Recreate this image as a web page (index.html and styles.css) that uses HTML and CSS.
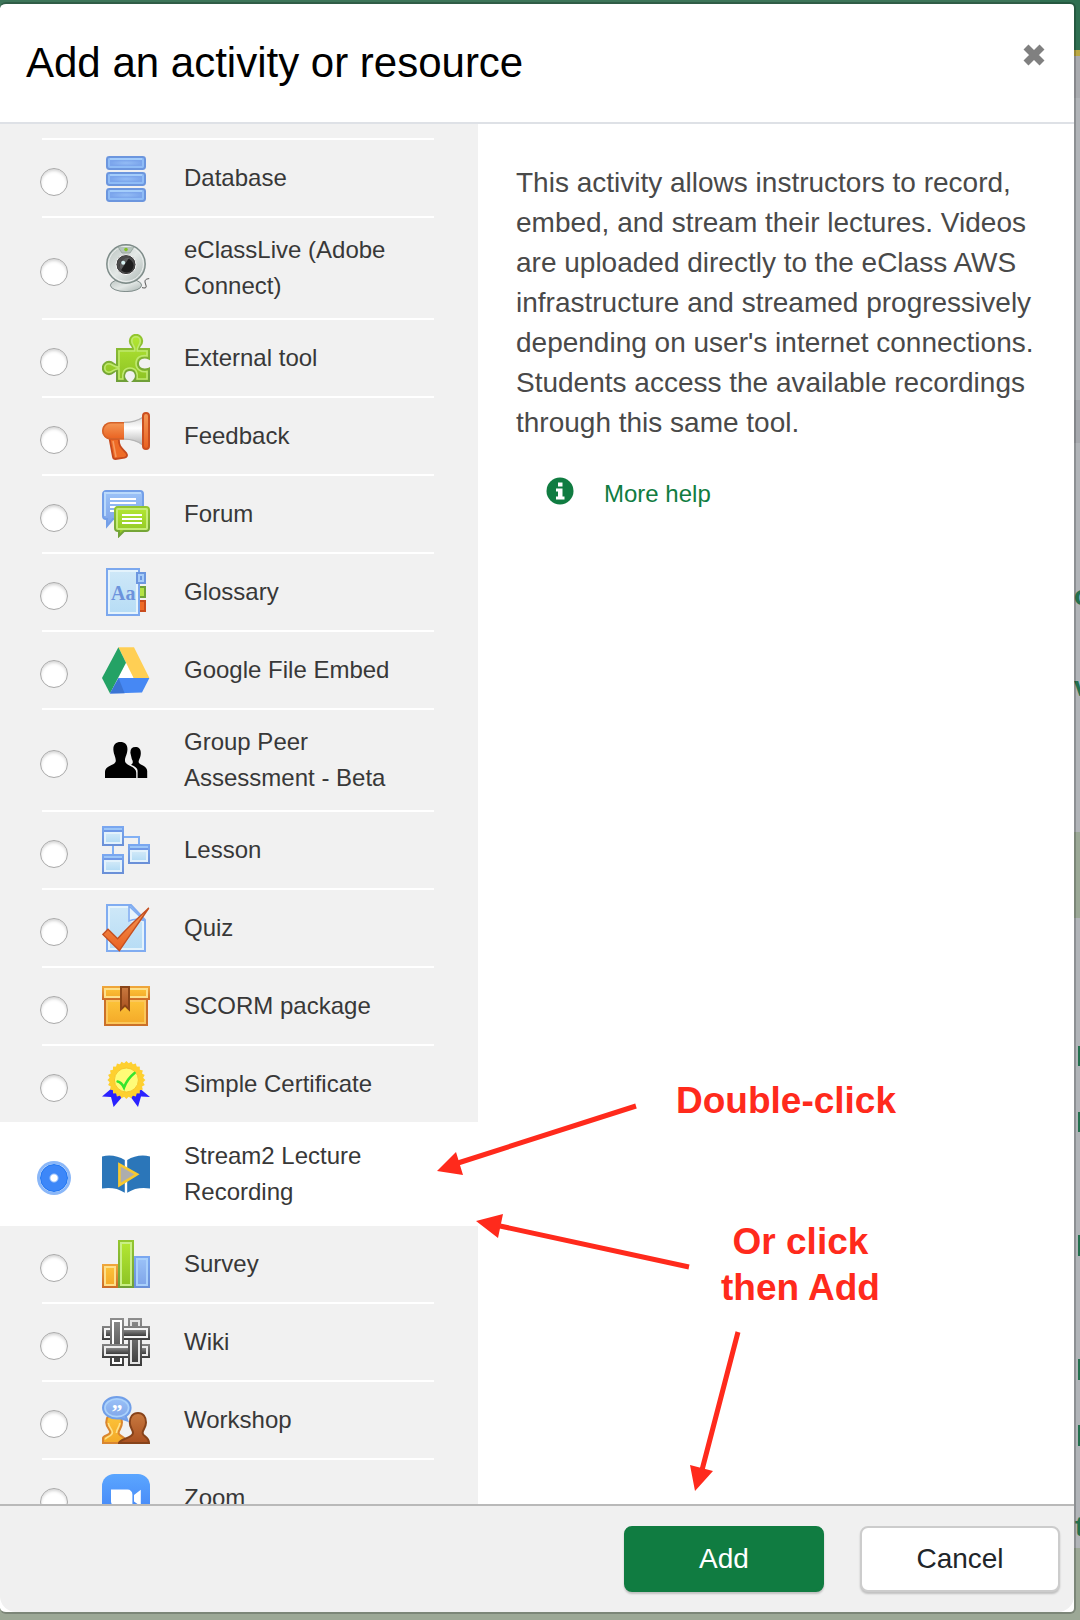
FILE: index.html
```html
<!DOCTYPE html>
<html lang="en">
<head>
<meta charset="utf-8">
<meta name="viewport" content="width=device-width, initial-scale=1">
<title>Add an activity or resource</title>
<link rel="stylesheet" href="styles.css">
</head>
<body>
<svg class="defs" aria-hidden="true">
  <defs>
    <linearGradient id="blue" x1="0" y1="0" x2="0" y2="1"><stop offset="0" stop-color="#9cc3f8"/><stop offset="1" stop-color="#7da3e8"/></linearGradient>
    <linearGradient id="blueEdge" x1="0" y1="0" x2="0" y2="1"><stop offset="0" stop-color="#7aa7f0"/><stop offset="1" stop-color="#6a90d8"/></linearGradient>
    <linearGradient id="pale" x1="0" y1="0" x2="0" y2="1"><stop offset="0" stop-color="#cfe8f8"/><stop offset="1" stop-color="#b6dcf5"/></linearGradient>
    <linearGradient id="green" x1="0" y1="0" x2="0" y2="1"><stop offset="0" stop-color="#b4e833"/><stop offset="1" stop-color="#8cc224"/></linearGradient>
    <linearGradient id="greenEdge" x1="0" y1="0" x2="0" y2="1"><stop offset="0" stop-color="#93c62f"/><stop offset="1" stop-color="#6f9f38"/></linearGradient>
    <linearGradient id="amber" x1="0" y1="0" x2="0" y2="1"><stop offset="0" stop-color="#fdc53a"/><stop offset="1" stop-color="#f3a828"/></linearGradient>
    <linearGradient id="amberEdge" x1="0" y1="0" x2="0" y2="1"><stop offset="0" stop-color="#efa63a"/><stop offset="1" stop-color="#cc6c28"/></linearGradient>
    <linearGradient id="orange" x1="0" y1="0" x2="0" y2="1"><stop offset="0" stop-color="#f59a58"/><stop offset="1" stop-color="#e9601f"/></linearGradient>
    <linearGradient id="brown" x1="0" y1="0" x2="0" y2="1"><stop offset="0" stop-color="#c97a40"/><stop offset="1" stop-color="#a95020"/></linearGradient>
    <linearGradient id="horn" x1="0" y1="0" x2="0" y2="1"><stop offset="0" stop-color="#d8d8d8"/><stop offset=".4" stop-color="#ffffff"/><stop offset="1" stop-color="#b4b4b4"/></linearGradient>
    <linearGradient id="steel" x1="0" y1="0" x2="1" y2="1"><stop offset="0" stop-color="#b9c2bf"/><stop offset=".5" stop-color="#e3e8e6"/><stop offset="1" stop-color="#aab5b2"/></linearGradient>
    <linearGradient id="weave" x1="0" y1="0" x2="0" y2="24" gradientUnits="userSpaceOnUse"><stop offset="0" stop-color="#8e8e8e"/><stop offset="1" stop-color="#3a3a3a"/></linearGradient>
    <linearGradient id="strand" x1="0" y1="0" x2="0" y2="1"><stop offset="0" stop-color="#858585"/><stop offset="1" stop-color="#3c3c3c"/></linearGradient>
    <linearGradient id="sky" x1="0" y1="0" x2="0" y2="1"><stop offset="0" stop-color="#5ba6ff"/><stop offset="1" stop-color="#3f7ff5"/></linearGradient>
    <radialGradient id="drum"><stop offset="0" stop-color="#93bcf5"/><stop offset="1" stop-color="#7ba5ec"/></radialGradient>
    <g id="disk"><rect x=".5" y=".5" width="19" height="6" rx="1.200" fill="#8fbcf6" stroke="#6c96de"/><rect x="2" y="2" width="16" height="3" fill="url(#drum)"/><path d="M2 1.500h16" stroke="#a4cdfb"/></g>
    <g id="card"><rect x=".5" y=".5" width="10" height="9" fill="#e3f2fc" stroke="url(#blueEdge)"/><path d="M1 1.500h9" stroke="#9cc6f8"/><path d="M1 2.500h9" stroke="#6f98e6"/><rect x="2" y="4" width="7" height="4" fill="url(#pale)"/></g>
  </defs>
</svg>

<svg class="backdrop" viewBox="0 0 40 1620" preserveAspectRatio="xMaxYMin slice" aria-hidden="true">
  <rect width="40" height="1620" fill="#b1b4b8"/>
  <rect width="40" height="50" fill="#2f6f51"/>
  <rect y="50" width="40" height="6" fill="#bba843"/>
  <rect y="56" width="40" height="42" fill="#a9abaf"/>
  <rect y="400" width="40" height="43" fill="#a6a8ad"/>
  <rect y="832" width="40" height="86" fill="#9ba896"/>
  <rect y="1548" width="40" height="72" fill="#9ca896"/>
  <g fill="#24704e">
    <path d="M38 1046h2v20h-2zM38 1112h2v20h-2zM38 1235h2v21h-2zM38 1359h2v21h-2zM38 1425h2v21h-2z"/>
    <text class="behind" x="34" y="605">o</text>
    <text class="behind" x="34" y="696">v</text>
    <text class="behind" x="35" y="1536">t</text>
  </g>
</svg>

<main class="dialog" role="dialog" aria-labelledby="title">
  <header class="header">
    <h1 class="title" id="title">Add an activity or resource</h1>
    <button class="close" type="button" aria-label="Close">
      <svg viewBox="0 0 28 28"><path d="M6 6l16 16M22 6L6 22" stroke="#808080" stroke-width="7"/></svg>
    </button>
  </header>

  <div class="body">
    <ul class="list">
      <li class="item"><label class="option"><input class="radio" type="radio" name="activity">
        <svg class="icon" viewBox="0 0 24 24"><use href="#disk" x="2" y="1"/><use href="#disk" x="2" y="9"/><use href="#disk" x="2" y="17"/></svg>
        <span class="name">Database</span></label></li>

      <li class="item"><label class="option"><input class="radio" type="radio" name="activity">
        <svg class="icon" viewBox="0 0 24 24"><path d="M18.500 21.500c3 .8 2-1 1.600-2.300-.4-1.600.4-2 2-2.200" transform="translate(1.500 .3)" fill="none" stroke="#555" stroke-width=".5"/><ellipse cx="12" cy="20.600" rx="7.800" ry="3.200" fill="url(#steel)" stroke="#7f8c8a" stroke-width=".5"/><circle cx="12" cy="10" r="9.600" fill="url(#steel)" stroke="#7d8b88" stroke-width=".7"/><circle cx="12" cy="10" r="8.700" fill="none" stroke="#eef1f0" stroke-width=".5"/><path d="M8 1.500l2 3h4l2-3" fill="#b5c2bb" stroke="#8f9d98" stroke-width=".4"/><circle cx="12" cy="2.800" r=".9" fill="#84c225"/><circle cx="12" cy="10.300" r="5" fill="#333" stroke="#f7f7f7" stroke-width=".5"/><circle cx="12" cy="10.300" r="4.500" fill="#4b4b4b"/><circle cx="12.300" cy="10.800" r="3.500" fill="#1e1e1e"/><path d="M9.500 13a4 4 0 0 1 4-6z" fill="#777" opacity=".7"/><circle cx="10.600" cy="9.400" r="1" fill="#d8f3f3"/></svg>
        <span class="name">eClassLive (Adobe Connect)</span></label></li>

      <li class="item"><label class="option"><input class="radio" type="radio" name="activity">
        <svg class="icon" viewBox="0 0 24 24"><path d="M7.500 7.500H15.400C16 6 13.900 5.800 13.900 3.500A3.100 3.100 0 0 1 20.100 3.500C20.100 5.800 18 6 18.600 7.500H23.500V12.300C21 11.200 18 12 18 14.800S21 18.300 23.500 17.300V23.500H15.800C18 21.500 16.800 18 14 18S10 21.500 12.200 23.500H7.500V18.300C6 18 5.800 20.100 3.500 20.100A3.100 3.100 0 0 1 3.500 13.900C5.800 13.900 6 16 7.500 15.500Z" fill="url(#green)" stroke="url(#greenEdge)"/><path d="M8.500 15.500v-7H16.400C17 6.300 14.900 5.800 14.900 3.500A2.100 2.100 0 0 1 19.100 3.500C19.100 5.800 17.300 6.300 17.600 8.500H22.500V10.900C19 10.400 17 12 17 14.800S19.500 19.300 22.500 18.800V22.500H17.600C18 19.500 17 17 14 17S10 19.500 10.400 22.500H8.500V17.400C6.300 17 5.500 19.100 3.500 19.100A2.100 2.100 0 0 1 3.500 14.900C5.500 14.900 6.300 17 8.500 16.500Z" fill="none" stroke="#bfe870" stroke-width=".8"/></svg>
        <span class="name">External tool</span></label></li>

      <li class="item"><label class="option"><input class="radio" type="radio" name="activity">
        <svg class="icon" viewBox="0 0 24 24"><path d="M3.800 13.500h4.600c0 4 1.500 4.500 3.700 7 .8 1.300.3 2-.8 2.300l-4.600.7c-.8 0-1.100-.5-1.200-1z" fill="#ee6b26" stroke="#c5491d" stroke-width=".9"/><path d="M5.500 14.500l1.500 8" stroke="#f79a5f" stroke-width=".8"/><path d="M11 5C15 5 18 4 20.500 2.300v14.500C18 14.800 15 13.800 11 13.800z" fill="url(#horn)"/><path d="M11 5.200C15 5.200 18 4.300 20.500 2.600M11 13.600c4 0 7 1 9.500 3" fill="none" stroke="#b5b5b5" stroke-width=".6"/><path d="M11 5H4.400a4.400 4.400 0 0 0 0 8.800H11z" fill="url(#orange)"/><path d="M11 5.400H4.400a4 4 0 0 0 0 8H11" fill="none" stroke="#d4622a" stroke-width=".8"/><rect x="20.500" y=".5" width="3" height="18" rx="1.500" fill="url(#orange)" stroke="#cb4f20"/></svg>
        <span class="name">Feedback</span></label></li>

      <li class="item"><label class="option"><input class="radio" type="radio" name="activity">
        <svg class="icon" viewBox="0 0 24 24"><path d="M2 .5h17A1.500 1.500 0 0 1 20.500 2v11A1.500 1.500 0 0 1 19 14.500H5.500L2.500 18V14.500H2A1.500 1.500 0 0 1 .5 13V2A1.500 1.500 0 0 1 2 .5z" fill="url(#blue)" stroke="#739fe8"/><path d="M1.500 13V1.500h18" fill="none" stroke="#b9d9fb"/><path d="M4 4.500h13M4 6.500h13M4 8.500h3M4 10.500h2" stroke="#fff"/><path d="M8 8.500h14A1.500 1.500 0 0 1 23.500 10v9a1.500 1.500 0 0 1-1.500 1.500H11L8.500 23v-2.500H8A1.500 1.500 0 0 1 6.500 19v-9A1.500 1.500 0 0 1 8 8.500z" fill="url(#green)" stroke="url(#greenEdge)"/><rect x="7.500" y="9.500" width="15" height="10" rx=".5" fill="none" stroke="#c5ec77"/><path d="M10 12.500h10M10 14.500h10M10 16.500h10" stroke="#fff"/></svg>
        <span class="name">Forum</span></label></li>

      <li class="item"><label class="option"><input class="radio" type="radio" name="activity">
        <svg class="icon" viewBox="0 0 24 24"><rect x="16.500" y="9.500" width="5" height="5" fill="#b4e244" stroke="#70a33a"/><rect x="16.500" y="16.500" width="5" height="5" fill="#ef6b25" stroke="#c94c1d"/><rect x="2.500" y=".5" width="16" height="23" fill="url(#pale)" stroke="#7ca8ee"/><rect x="3.500" y="1.500" width="14" height="21" fill="none" stroke="#e4f3fc"/><rect x="17.500" y="2.500" width="4" height="5" fill="#a7cdf9" stroke="#6d97df"/><rect x="19" y="4" width="1" height="2" fill="#6d97df"/><text class="glyph-aa" x="4.500" y="16">Aa</text></svg>
        <span class="name">Glossary</span></label></li>

      <li class="item"><label class="option"><input class="radio" type="radio" name="activity">
        <svg class="icon" viewBox="0 0 24 24"><path d="M12 8.400L16 16H8z" fill="#fff"/><path d="M8.200.6H16L23.700 16h-7.900z" fill="#ffcf54"/><path d="M8.200.6L12 8.400 4 23.800 0 16z" fill="#24a265"/><path d="M8.300 16h15.400L20 23.300 4 23.800z" fill="#4688f4"/><path d="M8.300 16l3 7.600L4 23.800z" fill="#3b74d4"/></svg>
        <span class="name">Google File Embed</span></label></li>

      <li class="item"><label class="option"><input class="radio" type="radio" name="activity">
        <svg class="icon" viewBox="0 0 24 24"><path d="M14.200 8.500C14.100 6.500 15 5.500 16.700 5.500S19.500 6.500 19.400 8.800C19.300 11 18.500 11.500 18.300 13c.1 1.500 4.300 1.800 4.300 4.500V21h-4.800v-3.600c0-1.200-1.200-2.200-3.300-3 1.300-.6 1-2 .4-2.900z"/><path d="M5.700 7C5.500 4.300 6.900 3 9.200 3s3.700 1.300 3.500 4c-.2 2.500-1.300 3.500-1.200 5.400 0 2.600 5.600 2.400 5.600 6V21H1.500v-3c0-3.400 5.400-3.200 5.400-5.600 0-1.900-1-2.900-1.200-5.400z"/></svg>
        <span class="name">Group Peer Assessment - Beta</span></label></li>

      <li class="item"><label class="option"><input class="radio" type="radio" name="activity">
        <svg class="icon" viewBox="0 0 24 24"><path d="M11 5.500h7.500V9M5.500 10v4" fill="none" stroke="#82b0f4"/><use href="#card"/><use href="#card" y="14"/><use href="#card" x="13" y="9"/></svg>
        <span class="name">Lesson</span></label></li>

      <li class="item"><label class="option"><input class="radio" type="radio" name="activity">
        <svg class="icon" viewBox="0 0 24 24"><path d="M2.500.5h12l7 7.500v15.500h-19z" fill="url(#pale)" stroke="#80acf1"/><path d="M3.500 1.500h10v7h7v14h-17z" fill="none" stroke="#e4f3fc"/><path d="M13.500 1v7.500c2-1 5-1 7.500-.3z" fill="#e8f5fd" stroke="#80acf1" stroke-width=".8"/><path d="M.4 15.200L3 12.600l4.800 4.800C12 12.500 18 7 23.400 2 19 8.500 14 15.500 8.700 23.300z" fill="url(#orange)" stroke="#c44f20" stroke-width=".7"/></svg>
        <span class="name">Quiz</span></label></li>

      <li class="item"><label class="option"><input class="radio" type="radio" name="activity">
        <svg class="icon" viewBox="0 0 24 24"><rect x="1.500" y="8.500" width="21" height="13" fill="url(#amber)" stroke="#cb7029"/><rect x="2.500" y="9.500" width="19" height="11" fill="none" stroke="#fbc75a"/><rect x=".5" y="2.500" width="23" height="6" fill="url(#amber)" stroke="url(#amberEdge)"/><rect x="1.500" y="3.500" width="21" height="4" fill="none" stroke="#fee08a"/><path d="M9.500 2.500h4v11.200l-2-1.900-2 1.900z" fill="url(#brown)" stroke="#8a4517"/></svg>
        <span class="name">SCORM package</span></label></li>

      <li class="item"><label class="option"><input class="radio" type="radio" name="activity">
        <svg class="icon" viewBox="0 0 24 24"><path d="M5 14L0 18.300l4.500.2 1.300 5L10.500 18zM19.200 14.500l4.800 4-4.500-.2-1.500 5.200-4.200-5.700z" fill="#2a22ff"/><g fill="#fed02f" transform="translate(12.200 10)"><rect id="ray" x="-6.700" y="-6.700" width="13.400" height="13.400"/><use href="#ray" transform="rotate(15)"/><use href="#ray" transform="rotate(30)"/><use href="#ray" transform="rotate(45)"/><use href="#ray" transform="rotate(60)"/><use href="#ray" transform="rotate(75)"/></g><circle cx="12.200" cy="10" r="6" fill="#fffb77" stroke="#f6c62e" stroke-width=".5"/><path d="M7.800 10.800c1.500.3 2.300 1.200 3.200 3 1.200-3.300 3-5.500 5.300-7.300" fill="none" stroke="#36e52c" stroke-width="1.300" stroke-linecap="round"/></svg>
        <span class="name">Simple Certificate</span></label></li>

      <li class="item selected"><label class="option"><input class="radio" type="radio" name="activity" checked>
        <svg class="icon" viewBox="0 0 24 24"><path d="M0 3.200c4-1 8-.3 11.400 1.800v16.400C8 19 4 18.600 0 19.200zM24 3.200c-4-1-8-.3-11.400 1.800v16.400C16 19 20 18.600 24 19.200z" fill="#2b76b9"/><path d="M8.700 7.200v10.400l8.800-5.400z" fill="#adadad" stroke="#f7c92f" stroke-width="1.300"/></svg>
        <span class="name">Stream2 Lecture Recording</span></label></li>

      <li class="item"><label class="option"><input class="radio" type="radio" name="activity">
        <svg class="icon" viewBox="0 0 24 24"><rect x=".5" y="12.500" width="7" height="11" fill="url(#amber)" stroke="url(#amberEdge)"/><rect x="1.500" y="13.500" width="5" height="9" fill="none" stroke="#fee08a"/><rect x="16.500" y="8.500" width="7" height="15" fill="url(#blue)" stroke="url(#blueEdge)"/><rect x="17.500" y="9.500" width="5" height="13" fill="none" stroke="#a9d0fb"/><rect x="8.500" y=".5" width="7" height="23" fill="url(#green)" stroke="url(#greenEdge)"/><rect x="9.500" y="1.500" width="5" height="21" fill="none" stroke="#c9ef85"/></svg>
        <span class="name">Survey</span></label></li>

      <li class="item"><label class="option"><input class="radio" type="radio" name="activity">
        <svg class="icon" viewBox="0 0 24 24"><g fill="url(#weave)"><path d="M4 0h7v24H4z"/><path d="M5 1h5v22H5z" fill="#fff"/><path d="M6 2h3v20H6z"/><path d="M0 13h24v7H0z" fill="url(#strand)"/><path d="M1 14h22v5H1z" fill="#ececec"/><path d="M2 15h20v3H2z" fill="url(#strand)"/><path d="M13 0h7v24h-7z"/><path d="M14 1h5v22h-5z" fill="#e4e4e4"/><path d="M15 2h3v20h-3z"/><path d="M0 4h24v7H0z" fill="url(#strand)"/><path d="M1 5h22v5H1z" fill="#f4f4f4"/><path d="M2 6h20v3H2z" fill="url(#strand)"/><path d="M4 0h7v13H4z"/><path d="M5 1h5v12H5z" fill="#fff"/><path d="M6 2h3v11H6z"/></g></svg>
        <span class="name">Wiki</span></label></li>

      <li class="item"><label class="option"><input class="radio" type="radio" name="activity">
        <svg class="icon" viewBox="0 0 24 24"><path d="M6 9c2.600 0 4 1.800 4 4.300 0 2.700-1.700 3.700-1.700 5.200 0 1.800 4.200 1.700 4.200 5H.5V21c0-1.300 3.600-1.300 3.600-3 0-1.200-2-2.500-2-4.700C2.100 10.500 3.500 9 6 9z" fill="url(#amber)" stroke="#d98530"/><path d="M3.200 13.500c0 2 2 3 2 4.700 0 2-3.600 2.200-3.600 3.500M8.900 13.500c0 2-1.700 3-1.700 5" fill="none" stroke="#fde08a" stroke-width=".8"/><path d="M18 8.500c2.600 0 4 2 4 4.800 0 2.700-1.700 3.500-1.700 5.200 0 1.800 3.200 1.700 3.200 5h-15c0-2 7-2.400 7-5 0-1.700-1.600-2.500-1.600-5.200 0-2.800 1.500-4.800 4.100-4.800z" fill="url(#brown)" stroke="#87431a"/><path d="M7.400.5c3.800 0 6.900 2.300 6.900 5.400 0 1.700-.9 3.200-2.400 4.200l.8 2.200-3.300-1.200c-5 .8-8.900-1.800-8.900-5.200C.5 2.800 3.600.5 7.400.5z" fill="url(#blue)" stroke="#719fe8"/><ellipse cx="7.400" cy="5.900" rx="5.900" ry="4.400" fill="none" stroke="#abd2fb" stroke-width=".8"/><text class="glyph-quote" x="4.700" y="11.700">”</text></svg>
        <span class="name">Workshop</span></label></li>

      <li class="item"><label class="option"><input class="radio" type="radio" name="activity">
        <svg class="icon" viewBox="0 0 24 24"><rect width="24" height="24" rx="6" fill="url(#sky)"/><path d="M4.500 7.800h8.300a2.400 2.400 0 0 1 2.400 2.400v6H7a2.500 2.500 0 0 1-2.500-2.400zM16 10.500l3.400-2.600v8.300L16 13.700z" fill="#fff"/></svg>
        <span class="name">Zoom</span></label></li>
    </ul>

    <section class="details">
      <p class="summary">This activity allows instructors to record, embed, and stream their lectures. Videos are uploaded directly to the eClass AWS infrastructure and streamed progressively depending on user's internet connections. Students access the available recordings through this same tool.</p>
      <a class="help" href="#">
        <svg class="help-icon" viewBox="0 0 28 28"><circle cx="14" cy="14" r="13.500" fill="#107c41"/><path d="M12 5.500h4.500v4H12zM10 11.500h6.500v8H18.500v3H10v-3h2v-5h-2z" fill="#fff"/></svg>
        More help</a>
    </section>
  </div>

  <footer class="footer">
    <button class="button primary" type="button">Add</button>
    <button class="button" type="button">Cancel</button>
  </footer>
</main>

<svg class="arrows" viewBox="0 0 1080 1620" aria-hidden="true">
  <g fill="#ff2a1c" stroke="#ff2a1c">
    <path d="M636 1106L458 1163M689 1267L500 1226M738 1332L702 1470" stroke-width="5"/>
    <path d="M437 1171l19-19 7 23zM476 1221l27-7-5 24zM695 1491l-5-26 23 6z" stroke="none"/>
  </g>
</svg>
<p class="note note-double">Double-click</p>
<p class="note note-add">Or click<br>then Add</p>
</body>
</html>
```
FILE: styles.css
```css
* {
  box-sizing: border-box;
}

body {
  margin: 0;
  position: relative;
  height: 100vh;
  overflow: hidden;
  padding: 2px 4px 6px 0;
  background: linear-gradient(#3d7559 60px, #9ca896 60px);
  font-family: "Liberation Sans", Arial, sans-serif;
  font-size: 24px;
  line-height: 36px;
  color: #383838;
}

.defs {
  position: absolute;
  width: 0;
  height: 0;
}

.backdrop {
  position: absolute;
  top: 0;
  right: 0;
  width: 40px;
  height: 100%;
}

.behind {
  font-size: 28px;
  font-weight: bold;
}

/* Dialog */

.dialog {
  position: relative;
  display: flex;
  flex-direction: column;
  height: 100%;
  border: 2px solid rgba(0, 0, 0, 0.2);
  border-left: 0;
  border-radius: 6px;
  background: #fff;
  background-clip: padding-box;
}

.header {
  display: flex;
  justify-content: space-between;
  align-items: flex-start;
  padding: 32px 26px;
  border-bottom: 2px solid #dee1e6;
}

.title {
  margin: 0;
  font-size: 42px;
  font-weight: normal;
  line-height: 54px;
  color: #000;
}

.close {
  display: flex;
  padding: 5px 0;
  border: 0;
  background: none;
}

.close svg {
  width: 28px;
  height: 28px;
}

.body {
  display: flex;
  flex: 1;
  min-height: 0;
}

/* Activity list */

.list {
  flex: 0 0 478px;
  margin: 0;
  padding: 14px 0 0;
  overflow: hidden;
  list-style: none;
  background: #f1f1f1;
}

.item {
  padding: 0 44px 0 42px;
}

.option {
  display: flex;
  align-items: center;
  gap: 34px;
  padding: 14px 0;
  border-bottom: 2px solid #fff;
}

.item:first-child .option {
  border-top: 2px solid #fff;
}

.selected {
  background: #fff;
  box-shadow: 0 -2px 0 #fff;
}

.radio {
  appearance: none;
  flex: none;
  width: 28px;
  height: 28px;
  margin: 8px 0 0 -2px;
  border: 1px solid #a9a9a9;
  border-radius: 50%;
  background: #fff;
  box-shadow: inset 0 2px 3px rgba(0, 0, 0, 0.16);
}

.radio:checked {
  border: 1px solid #1a73f2;
  background: radial-gradient(circle, #fff 3px, #3d87f8 5px);
  box-shadow: 0 0 0 3px #8ab7f8;
}

.icon {
  flex: none;
  width: 48px;
  height: 48px;
}

.name {
  flex: 1;
}

.glyph-aa {
  font: bold 10px "Liberation Serif", serif;
  fill: #6c93dc;
}

.glyph-quote {
  font: bold 11px "Liberation Serif", serif;
  fill: #fff;
}

/* Description */

.details {
  flex: 1;
  padding: 39px 38px 0;
}

.summary {
  margin: 0 0 33px;
  font-size: 28px;
  line-height: 40px;
  color: #494949;
}

.help {
  display: flex;
  align-items: center;
  gap: 30px;
  padding-left: 30px;
  color: #107c41;
  text-decoration: none;
}

.help-icon {
  width: 28px;
  height: 28px;
  margin-bottom: 6px;
}

/* Footer */

.footer {
  display: flex;
  justify-content: flex-end;
  gap: 36px;
  padding: 20px 14px;
  border-top: 2px solid #b9b9b9;
  border-radius: 0 0 16px 16px;
  background: #f0f0f0;
}

.button {
  width: 200px;
  height: 66px;
  border: 2px solid #ccc;
  border-radius: 8px;
  background: #fff;
  box-shadow: 0 2px 2px rgba(0, 0, 0, 0.2);
  font-family: inherit;
  font-size: 28px;
  color: #212529;
}

.primary {
  border-color: #107c41;
  background: #107c41;
  color: #fff;
}

/* Annotations over the dialog */

.arrows {
  position: absolute;
  top: 0;
  left: 0;
  width: 1080px;
  height: 1620px;
  pointer-events: none;
}

.note {
  position: absolute;
  margin: 0;
  font-size: 37px;
  font-weight: bold;
  line-height: 46px;
  text-align: center;
  color: #ff2a1c;
}

.note-double {
  top: 1078px;
  left: 676px;
}

.note-add {
  top: 1219px;
  left: 721px;
}
```
